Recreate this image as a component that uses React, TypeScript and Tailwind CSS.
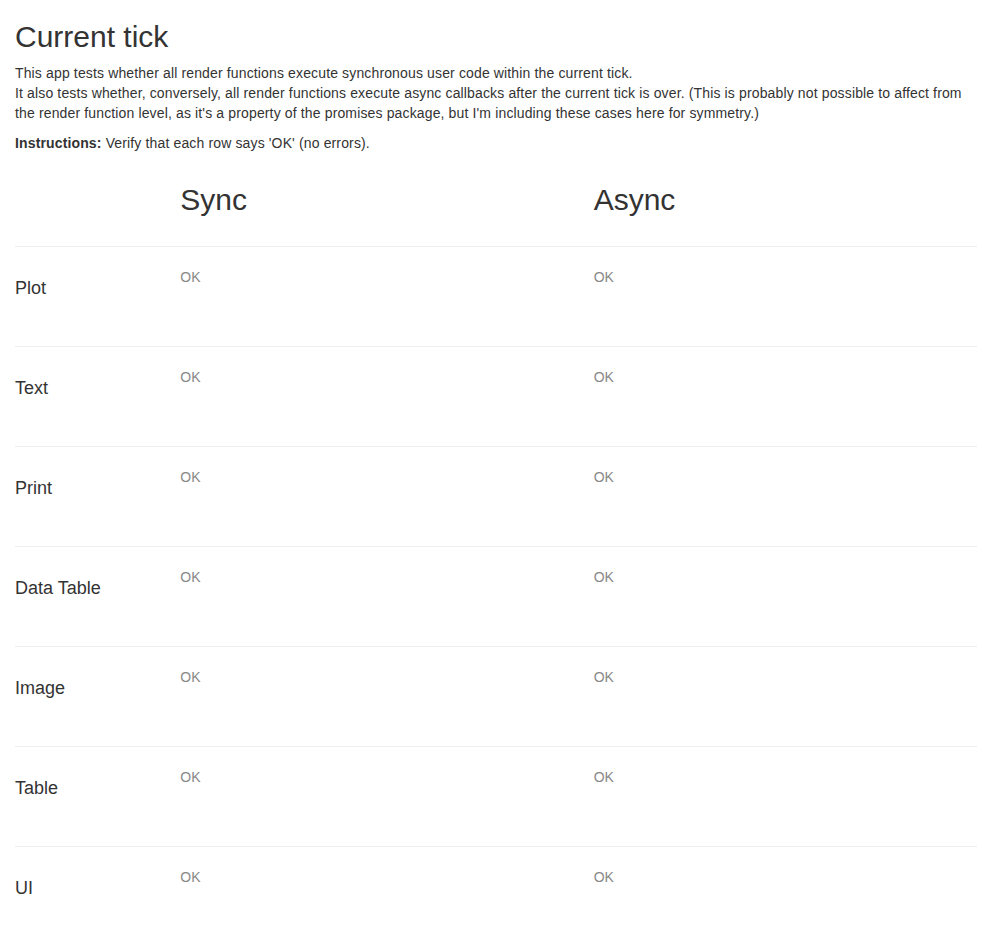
import React from "react";

const rows = ["Plot", "Text", "Print", "Data Table", "Image", "Table", "UI"];

export default function App() {
  return (
    <div
      className="px-[15px] text-[14px] leading-[20px] text-[#333] bg-white"
      style={{ fontFamily: '"Liberation Sans", Arial, Helvetica, sans-serif' }}
    >
      <h2 className="mt-[20px] mb-[10px] text-[30px] leading-[33px] font-normal">Current tick</h2>
      <p className="mb-[10px] tracking-[0.14px]">
        This app tests whether all render functions execute synchronous user code within the current tick.
        <br />
        It also tests whether, conversely, all render functions execute async callbacks after the current tick is over. (This is probably not possible to affect from the render function level, as it's a property of the promises package, but I'm including these cases here for symmetry.)
      </p>
      <p className="mb-[10px] tracking-[0.14px]">
        <strong className="font-bold">Instructions:</strong> Verify that each row says 'OK' (no errors).
      </p>
      <div className="grid grid-cols-[2fr_5fr_5fr] mx-[-15px]">
        <div className="px-[15px]" />
        <div className="px-[15px]">
          <h2 className="mt-[20px] mb-[10px] text-[30px] leading-[33px] font-normal">Sync</h2>
        </div>
        <div className="px-[15px]">
          <h2 className="mt-[20px] mb-[10px] text-[30px] leading-[33px] font-normal">Async</h2>
        </div>
      </div>
      {rows.map((r) => (
        <div key={r}>
          <hr className="my-[20px] border-0 border-t border-t-[#eeeeee]" />
          <div className="grid grid-cols-[2fr_5fr_5fr] mx-[-15px] h-[59px]">
            <div className="px-[15px]">
              <h4 className="mt-[12px] mb-[10px] text-[18px] leading-[19.8px] font-normal">{r}</h4>
            </div>
            <div className="px-[15px] text-[#888]">OK</div>
            <div className="px-[15px] text-[#888]">OK</div>
          </div>
        </div>
      ))}
    </div>
  );
}
